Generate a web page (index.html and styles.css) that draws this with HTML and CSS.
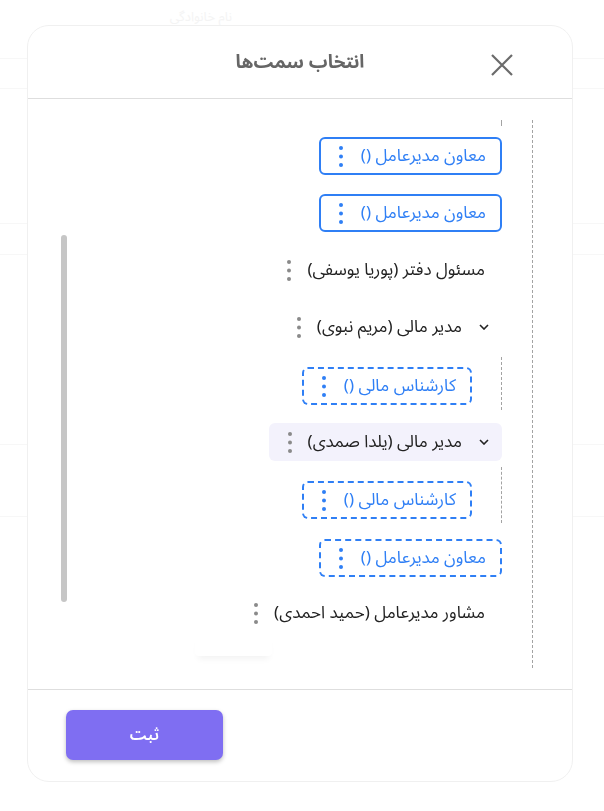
FILE: index.html
```html
<!DOCTYPE html>
<html lang="fa" dir="rtl">
<head>
<meta charset="utf-8">
<title>انتخاب سمت‌ها</title>
<link rel="stylesheet" href="styles.css">
</head>
<body>
<div class="page">
  <div class="page-head">نام خانوادگی</div>
  <div class="page-line l1"></div>
  <div class="page-line l2"></div>
  <div class="page-line l3"></div>
  <div class="page-line l4"></div>
  <div class="page-line l5"></div>
  <div class="page-line l6"></div>
</div>

<div class="modal" role="dialog">
  <header class="modal-header">
    <button class="close" aria-label="بستن">
      <svg width="24" height="24" viewBox="0 0 24 24"><path d="M2 2L22 22M22 2L2 22" stroke="#6b6b6b" stroke-width="2.2" fill="none"/></svg>
    </button>
    <h2 class="modal-title">انتخاب سمت‌ها</h2>
  </header>

  <div class="modal-body">
    <div class="tree">
      <div class="branch branch-tail"></div>

      <div class="chip mt-11"><span class="label">معاون مدیرعامل ()</span><span class="kebab blue"><svg width="4" height="21" viewBox="0 0 4 21"><circle cx="2" cy="2" r="2"/><circle cx="2" cy="10.5" r="2"/><circle cx="2" cy="19" r="2"/></svg></span></div>

      <div class="chip mt-19"><span class="label">معاون مدیرعامل ()</span><span class="kebab blue"><svg width="4" height="21" viewBox="0 0 4 21"><circle cx="2" cy="2" r="2"/><circle cx="2" cy="10.5" r="2"/><circle cx="2" cy="19" r="2"/></svg></span></div>

      <div class="row mt-19"><span class="label">مسئول دفتر (پوریا یوسفی)</span><span class="kebab gray"><svg width="4" height="21" viewBox="0 0 4 21"><circle cx="2" cy="2" r="2"/><circle cx="2" cy="10.5" r="2"/><circle cx="2" cy="19" r="2"/></svg></span></div>

      <div class="row has-toggle mt-19"><span class="toggle"><svg width="10" height="6" viewBox="0 0 10 6"><path d="M1 1L5 5L9 1" stroke="#222" stroke-width="1.6" fill="none"/></svg></span><span class="label">مدیر مالی (مریم نبوی)</span><span class="kebab gray"><svg width="4" height="21" viewBox="0 0 4 21"><circle cx="2" cy="2" r="2"/><circle cx="2" cy="10.5" r="2"/><circle cx="2" cy="19" r="2"/></svg></span></div>

      <div class="branch branch-a">
        <div class="chip dashed"><span class="label">کارشناس مالی ()</span><span class="kebab blue"><svg width="4" height="21" viewBox="0 0 4 21"><circle cx="2" cy="2" r="2"/><circle cx="2" cy="10.5" r="2"/><circle cx="2" cy="19" r="2"/></svg></span></div>
      </div>

      <div class="row has-toggle active mt-13"><span class="toggle"><svg width="10" height="6" viewBox="0 0 10 6"><path d="M1 1L5 5L9 1" stroke="#222" stroke-width="1.6" fill="none"/></svg></span><span class="label">مدیر مالی (یلدا صمدی)</span><span class="kebab gray"><svg width="4" height="21" viewBox="0 0 4 21"><circle cx="2" cy="2" r="2"/><circle cx="2" cy="10.5" r="2"/><circle cx="2" cy="19" r="2"/></svg></span></div>

      <div class="branch branch-b">
        <div class="chip dashed"><span class="label">کارشناس مالی ()</span><span class="kebab blue"><svg width="4" height="21" viewBox="0 0 4 21"><circle cx="2" cy="2" r="2"/><circle cx="2" cy="10.5" r="2"/><circle cx="2" cy="19" r="2"/></svg></span></div>
      </div>

      <div class="chip dashed mt-16"><span class="label">معاون مدیرعامل ()</span><span class="kebab blue"><svg width="4" height="21" viewBox="0 0 4 21"><circle cx="2" cy="2" r="2"/><circle cx="2" cy="10.5" r="2"/><circle cx="2" cy="19" r="2"/></svg></span></div>

      <div class="row mt-17"><span class="label">مشاور مدیرعامل (حمید احمدی)</span><span class="kebab gray"><svg width="4" height="21" viewBox="0 0 4 21"><circle cx="2" cy="2" r="2"/><circle cx="2" cy="10.5" r="2"/><circle cx="2" cy="19" r="2"/></svg></span></div>
    </div>

    <div class="scroll-track"><div class="scroll-thumb"></div></div>
  </div>

  <footer class="modal-footer">
    <button class="submit">ثبت</button>
  </footer>

  <div class="ghost-menu"></div>
</div>
</body>
</html>
```

FILE: styles.css
```css
* { box-sizing: border-box; }

html, body { margin: 0; padding: 0; }

body {
  width: 604px;
  height: 811px;
  overflow: hidden;
  background: #ffffff;
  font-family: "Noto Sans Arabic", "DejaVu Sans", sans-serif;
  color: #222;
}

/* faint page behind the dialog */
.page { padding-top: 6px; }
.page-head {
  height: 22px;
  padding-right: 372px;
  font-size: 13px;
  line-height: 22px;
  color: #f4f4f4;
}
.page-line { height: 1px; background: #f7f7f7; }
.l1 { margin-top: 30px; }
.l2 { margin-top: 29px; }
.l3 { margin-top: 134px; }
.l4 { margin-top: 30px; }
.l5 { margin-top: 189px; }
.l6 { margin-top: 71px; }

/* dialog */
.modal {
  position: fixed;
  top: 25px;
  left: 27px;
  width: 546px;
  height: 757px;
  background: #fff;
  border: 1px solid #f0f0f0;
  border-radius: 22px;
  display: flex;
  flex-direction: column;
}

.modal-header {
  flex: 0 0 73px;
  border-bottom: 1px solid #dedede;
  display: grid;
  grid-template-columns: 1fr auto 1fr;
  align-items: center;
}

.modal-title {
  grid-column: 2;
  grid-row: 1;
  margin: 0;
  font-size: 18.6px;
  font-weight: 700;
  color: #666;
  line-height: 1;
}

.close {
  grid-column: 1;
  grid-row: 1;
  justify-self: start;
  margin: 6px 58px 0 0;
  width: 24px;
  height: 24px;
  padding: 0;
  border: 0;
  background: none;
  display: flex;
}

.modal-body {
  flex: 1 1 auto;
  min-height: 0;
  display: flex;
}

.tree {
  flex: 1 1 auto;
  margin: 21px 39px 0 0;
  height: 548px;
  border-right: 1px dashed #a3a3a3;
  padding-right: 30px;
  display: flex;
  flex-direction: column;
  align-items: flex-start;
}

.scroll-track {
  flex: 0 0 auto;
  margin-top: 136px;
  margin-left: 33px;
}
.scroll-thumb {
  width: 6px;
  height: 367px;
  border-radius: 3px;
  background: #c6c6c6;
}

.branch {
  align-self: stretch;
  border-right: 1px dashed #a3a3a3;
  padding-right: 29px;
  display: flex;
  flex-direction: column;
  align-items: flex-start;
}
.branch-tail { height: 6px; }
.branch-a { margin-top: 11px; padding-top: 10px; padding-bottom: 5px; }
.branch-b { margin-top: 6px; padding-top: 14px; padding-bottom: 4px; }

.mt-11 { margin-top: 11px; }
.mt-13 { margin-top: 13px; }
.mt-16 { margin-top: 16px; }
.mt-17 { margin-top: 17px; }
.mt-19 { margin-top: 19px; }

.chip, .row {
  display: flex;
  align-items: center;
  height: 38px;
  font-size: 17px;
  line-height: 1;
  white-space: nowrap;
}

.chip {
  border: 2px solid #2f7ff5;
  border-radius: 6px;
  color: #2f7ff5;
  padding: 0 14px 0 10px;
  gap: 10px;
}
.chip.dashed { border-style: dashed; }

.row {
  color: #222;
  padding: 0 17px 0 11px;
  gap: 8px;
  border-radius: 6px;
}
.row.has-toggle { padding-right: 8px; }
.row.active { background: #f3f2fc; }

.toggle {
  width: 20px;
  display: flex;
  justify-content: center;
  margin-left: 4px;
}

.kebab {
  width: 20px;
  display: flex;
  justify-content: center;
}
.kebab.blue { fill: #2f7ff5; }
.kebab.gray { fill: #8a8a8a; }

.modal-footer {
  flex: 0 0 92px;
  border-top: 1px solid #dedede;
  display: flex;
  justify-content: flex-end;
  align-items: flex-start;
  padding: 20px 0 0 38px;
}

.submit {
  width: 157px;
  height: 50px;
  border: 0;
  border-radius: 7px;
  background: #7f6ef2;
  color: #fff;
  font-family: inherit;
  font-size: 16px;
  font-weight: 600;
  box-shadow: 0 2px 4px rgba(0, 0, 0, 0.25);
}

.ghost-menu {
  position: absolute;
  left: 167px;
  top: 608px;
  width: 77px;
  height: 22px;
  background: #fff;
  box-shadow: 0 6px 6px -3px rgba(0, 0, 0, 0.05);
  border-radius: 0 0 4px 4px;
}
```
